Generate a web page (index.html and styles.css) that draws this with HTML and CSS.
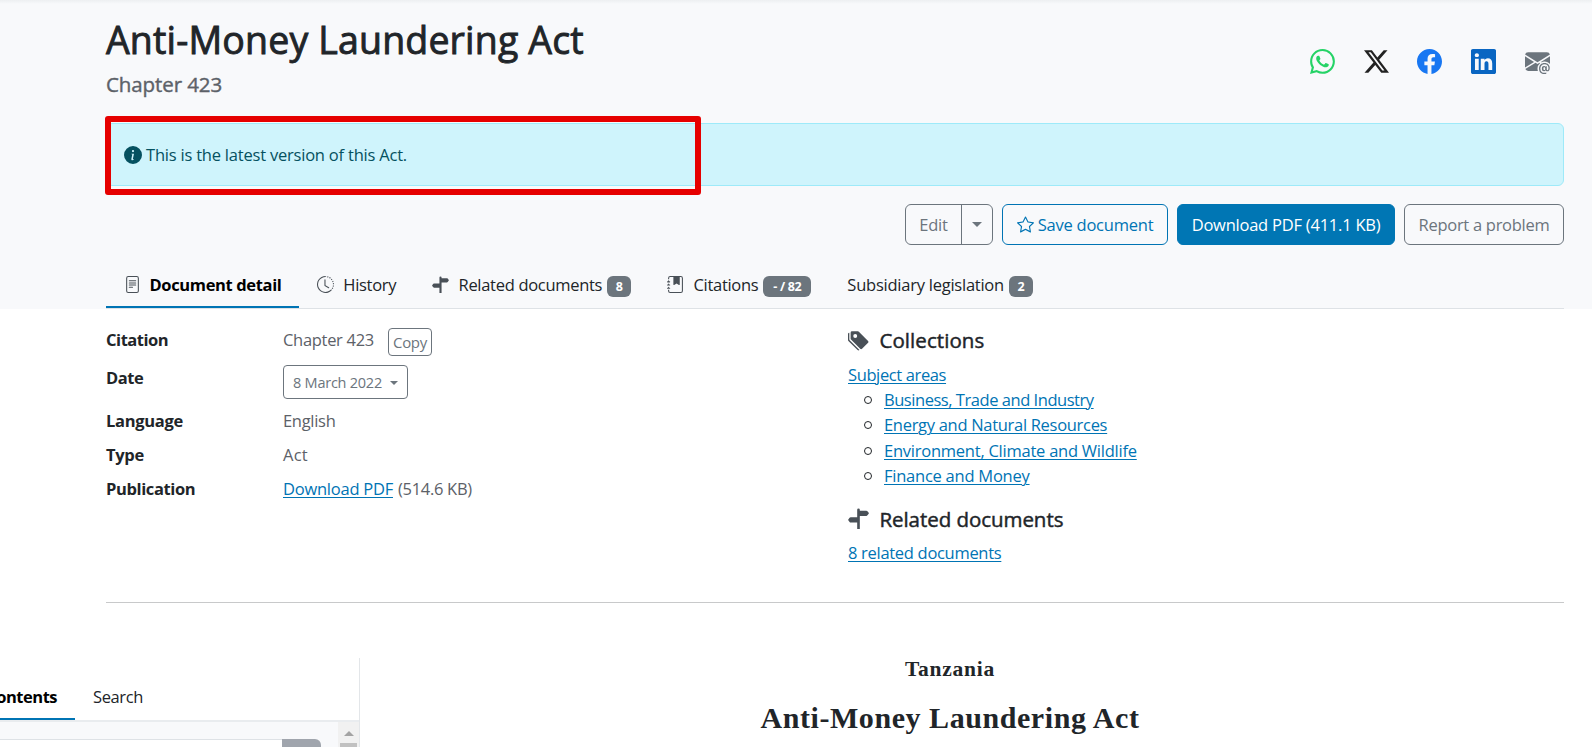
FILE: index.html
```
<!DOCTYPE html>
<html lang="en">
<head>
<meta charset="utf-8">
<title>Anti-Money Laundering Act</title>
<link rel="stylesheet" href="styles.css">
</head>
<body>
<svg class="defs" width="0" height="0">
  <symbol id="signpost" viewBox="0 0 16 16"><path d="M7 16h2V6h5a1 1 0 0 0 .8-.4l.975-1.3a.5.5 0 0 0 0-.6L14.8 2.4A1 1 0 0 0 14 2H9v-.586a1 1 0 0 0-2 0V7H2a1 1 0 0 0-.8.4L.225 8.7a.5.5 0 0 0 0 .6l.975 1.3a1 1 0 0 0 .8.4h5z"/></symbol>
</svg>
<header class="head">
  <div class="title-row">
    <div>
      <h1>Anti-Money Laundering Act</h1>
      <div class="sub">Chapter 423</div>
    </div>
    <div class="share">
      <svg class="wa" viewBox="0 0 16 16"><path d="M13.601 2.326A7.85 7.85 0 0 0 7.994 0C3.627 0 .068 3.558.064 7.926c0 1.399.366 2.76 1.057 3.965L0 16l4.204-1.102a7.9 7.9 0 0 0 3.79.965h.004c4.368 0 7.926-3.558 7.93-7.93A7.9 7.9 0 0 0 13.6 2.326zM7.994 14.521a6.6 6.6 0 0 1-3.356-.92l-.24-.144-2.494.654.666-2.433-.156-.251a6.56 6.56 0 0 1-1.007-3.505c0-3.626 2.957-6.584 6.591-6.584a6.56 6.56 0 0 1 4.66 1.931 6.56 6.56 0 0 1 1.928 4.66c-.004 3.639-2.961 6.592-6.592 6.592m3.615-4.934c-.197-.099-1.17-.578-1.353-.646-.182-.065-.315-.099-.445.099-.133.197-.513.646-.627.775-.114.133-.232.148-.43.05-.197-.1-.836-.308-1.592-.985-.59-.525-.985-1.175-1.103-1.372-.114-.198-.011-.304.088-.403.087-.088.197-.232.296-.346.1-.114.133-.198.198-.33.065-.134.034-.248-.015-.347-.05-.099-.445-1.076-.612-1.47-.16-.389-.323-.335-.445-.34-.114-.007-.247-.007-.38-.007a.73.73 0 0 0-.529.247c-.182.198-.691.677-.691 1.654s.71 1.916.81 2.049c.098.133 1.394 2.132 3.383 2.992.47.205.84.326 1.129.418.475.152.904.129 1.246.08.38-.058 1.171-.48 1.338-.943.164-.464.164-.86.114-.943-.049-.084-.182-.133-.38-.232"/></svg>
      <svg class="tx" viewBox="0 0 16 16"><path d="M12.6.75h2.454l-5.36 6.142L16 15.25h-4.937l-3.867-5.07-4.425 5.07H.316l5.733-6.57L0 .75h5.063l3.495 4.633L12.601.75Zm-.86 13.028h1.36L4.323 2.145H2.865z"/></svg>
      <svg class="fb" viewBox="0 0 16 16"><path d="M16 8.049c0-4.446-3.582-8.05-8-8.05C3.58 0-.002 3.603-.002 8.05c0 4.017 2.926 7.347 6.75 7.951v-5.625h-2.03V8.05H6.75V6.275c0-2.017 1.195-3.131 3.022-3.131.876 0 1.791.157 1.791.157v1.98h-1.009c-.993 0-1.303.621-1.303 1.258v1.51h2.218l-.354 2.326H9.25V16c3.824-.604 6.75-3.934 6.75-7.951"/></svg>
      <svg class="li" viewBox="0 0 16 16"><path d="M0 1.146C0 .513.526 0 1.175 0h13.65C15.474 0 16 .513 16 1.146v13.708c0 .633-.526 1.146-1.175 1.146H1.175C.526 16 0 15.487 0 14.854zm4.943 12.248V6.169H2.542v7.225zm-1.2-8.212c.837 0 1.358-.554 1.358-1.248-.015-.709-.52-1.248-1.342-1.248S2.4 3.226 2.4 3.934c0 .694.521 1.248 1.327 1.248zm4.908 8.212V9.359c0-.216.016-.432.08-.586.173-.431.568-.878 1.232-.878.869 0 1.216.662 1.216 1.634v3.865h2.401V9.25c0-2.22-1.184-3.252-2.764-3.252-1.274 0-1.845.7-2.165 1.193v.025h-.016l.016-.025V6.169h-2.4c.03.678 0 7.225 0 7.225z"/></svg>
      <svg class="em" viewBox="0 0 16 16"><path d="M2 2A2 2 0 0 0 .05 3.555L8 8.414l7.95-4.859A2 2 0 0 0 14 2zm-2 9.8V4.698l5.803 3.546zm6.761-2.97-6.57 4.026A2 2 0 0 0 2 14h6.256A4.5 4.5 0 0 1 8 12.5a4.49 4.49 0 0 1 1.606-3.446l-.367-.225L8 9.586zM16 9.671V4.697l-5.803 3.546.338.208A4.5 4.5 0 0 1 12.5 8c1.414 0 2.675.652 3.5 1.671"/><path d="M15.834 12.244c0 1.168-.577 2.025-1.587 2.025-.503 0-1.002-.228-1.12-.648h-.043c-.118.416-.543.643-1.015.643-.77 0-1.259-.542-1.259-1.434v-.529c0-.844.481-1.4 1.26-1.4.585 0 .87.333.953.63h.03v-.568h.905v2.19c0 .272.18.42.411.42.315 0 .639-.415.639-1.39v-.118c0-1.277-.95-2.326-2.484-2.326h-.04c-1.582 0-2.64 1.067-2.64 2.724v.157c0 1.867 1.237 2.654 2.57 2.654h.045c.507 0 .935-.07 1.18-.18v.731c-.219.1-.643.175-1.237.175h-.044C10.438 16 9 14.82 9 12.646v-.214C9 10.36 10.421 9 12.485 9h.035c2.12 0 3.314 1.43 3.314 3.034zm-4.04.21v.227c0 .586.227.8.581.8.31 0 .564-.17.564-.743v-.367c0-.516-.275-.708-.572-.708-.346 0-.573.245-.573.791"/></svg>
    </div>
  </div>
  <div class="alert">
    <svg viewBox="0 0 16 16"><path d="M8 16A8 8 0 1 0 8 0a8 8 0 0 0 0 16m.93-9.412-1 4.705c-.07.34.029.533.304.533.194 0 .487-.07.686-.246l-.088.416c-.287.346-.92.598-1.465.598-.703 0-1.002-.422-.808-1.319l.738-3.468c.064-.293.006-.399-.287-.47l-.451-.081.082-.381 2.29-.287zM8 5.5a1 1 0 1 1 0-2 1 1 0 0 1 0 2"/></svg>
    <span class="message">This is the latest version of this Act.</span>
    <div class="marker"></div>
  </div>
  <div class="actions">
    <div class="split"><span class="edit">Edit</span><span class="toggle"><i class="caret"></i></span></div>
    <a class="btn save"><svg viewBox="0 0 16 16"><path d="M2.866 14.85c-.078.444.36.791.746.593l4.39-2.256 4.389 2.256c.386.198.824-.149.746-.592l-.83-4.73 3.522-3.356c.33-.314.16-.888-.282-.95l-4.898-.696L8.465.792a.513.513 0 0 0-.927 0L5.354 5.12l-4.898.696c-.441.062-.612.636-.283.95l3.523 3.356-.83 4.73zm4.905-2.767-3.686 1.894.694-3.957a.56.56 0 0 0-.163-.505L1.71 6.745l4.052-.576a.53.53 0 0 0 .393-.288L8 2.223l1.847 3.658a.53.53 0 0 0 .393.288l4.052.575-2.906 2.77a.56.56 0 0 0-.163.506l.694 3.957-3.686-1.894a.5.5 0 0 0-.461 0z"/></svg><span>Save document</span></a>
    <a class="btn dl"><span>Download PDF (411.1 KB)</span></a>
    <a class="btn report"><span>Report a problem</span></a>
  </div>
  <nav class="tabs">
    <a class="tab active"><svg viewBox="0 0 16 16"><path d="M5 4a.5.5 0 0 0 0 1h6a.5.5 0 0 0 0-1zm-.5 2.5A.5.5 0 0 1 5 6h6a.5.5 0 0 1 0 1H5a.5.5 0 0 1-.5-.5M5 8a.5.5 0 0 0 0 1h6a.5.5 0 0 0 0-1zm0 2a.5.5 0 0 0 0 1h3a.5.5 0 0 0 0-1z"/><path d="M2 2a2 2 0 0 1 2-2h8a2 2 0 0 1 2 2v12a2 2 0 0 1-2 2H4a2 2 0 0 1-2-2zm10-1H4a1 1 0 0 0-1 1v12a1 1 0 0 0 1 1h8a1 1 0 0 0 1-1V2a1 1 0 0 0-1-1"/></svg><span>Document detail</span></a>
    <a class="tab"><svg viewBox="0 0 16 16"><path d="M8.515 1.019A7 7 0 0 0 8 1V0a8 8 0 0 1 .589.022zm2.004.45a7 7 0 0 0-.985-.299l.219-.976q.576.129 1.126.342zm1.37.71a7 7 0 0 0-.439-.27l.493-.87a8 8 0 0 1 .979.654l-.615.789a7 7 0 0 0-.418-.302zm1.834 1.79a7 7 0 0 0-.653-.796l.724-.69q.406.429.747.91zm.744 1.352a7 7 0 0 0-.214-.468l.893-.45a8 8 0 0 1 .45 1.088l-.95.313a7 7 0 0 0-.179-.483m.53 2.507a7 7 0 0 0-.1-1.025l.985-.17q.1.58.116 1.17zm-.131 1.538q.05-.254.081-.51l.993.123a8 8 0 0 1-.23 1.155l-.964-.267q.069-.247.12-.501m-.952 2.379q.276-.436.486-.908l.914.405q-.24.54-.555 1.038zm-.964 1.205q.183-.183.35-.378l.758.653a8 8 0 0 1-.401.432z"/><path d="M8 1a7 7 0 1 0 4.95 11.95l.707.707A8.001 8.001 0 1 1 8 0z"/><path d="M7.5 3a.5.5 0 0 1 .5.5v5.21l3.248 1.856a.5.5 0 0 1-.496.868l-3.5-2A.5.5 0 0 1 7 9V3.5a.5.5 0 0 1 .5-.5"/></svg><span>History</span></a>
    <a class="tab"><svg viewBox="0 0 16 16"><use href="#signpost"/></svg><span>Related documents</span><b class="badge">8</b></a>
    <a class="tab"><svg viewBox="0 0 16 16"><path d="M5 0h8a2 2 0 0 1 2 2v12a2 2 0 0 1-2 2H3a2 2 0 0 1-2-2v-1h1v1a1 1 0 0 0 1 1h10a1 1 0 0 0 1-1V2a1 1 0 0 0-1-1H3a1 1 0 0 0-1 1v1H1V2a2 2 0 0 1 2-2z"/><path d="M6 1h6v7a.5.5 0 0 1-.757.429L9 7.083 6.757 8.43A.5.5 0 0 1 6 8z"/><path d="M1 5v-.5a.5.5 0 0 1 1 0V5h.5a.5.5 0 0 1 0 1h-2a.5.5 0 0 1 0-1zm0 3v-.5a.5.5 0 0 1 1 0V8h.5a.5.5 0 0 1 0 1h-2a.5.5 0 0 1 0-1zm0 3v-.5a.5.5 0 0 1 1 0v.5h.5a.5.5 0 0 1 0 1h-2a.5.5 0 0 1 0-1z"/></svg><span>Citations</span><b class="badge wide">- / 82</b></a>
    <a class="tab"><span class="snug">Subsidiary legislation</span><b class="badge">2</b></a>
  </nav>
</header>
<main>
  <section class="detail">
    <dl>
      <dt class="tighter">Citation</dt><dd><span>Chapter 423</span><a class="copy">Copy</a></dd>
      <dt class="tighter">Date</dt><dd><a class="date"><span class="snug">8 March 2022</span><i class="caret small"></i></a></dd>
      <dt>Language</dt><dd><span>English</span></dd>
      <dt>Type</dt><dd><span class="loose">Act</span></dd>
      <dt class="tight">Publication</dt><dd><a class="link snug">Download PDF</a><span class="gap">(514.6 KB)</span></dd>
    </dl>
    <div class="side">
      <h2><svg viewBox="0 0 16 16"><path d="M2 2a1 1 0 0 1 1-1h4.586a1 1 0 0 1 .707.293l7 7a1 1 0 0 1 0 1.414l-4.586 4.586a1 1 0 0 1-1.414 0l-7-7A1 1 0 0 1 2 6.586zm3.5 4a1.5 1.5 0 1 0 0-3 1.5 1.5 0 0 0 0 3"/><path d="M1.293 7.793A1 1 0 0 1 1 7.086V2a1 1 0 0 0-1 1v4.586a1 1 0 0 0 .293.707l7 7a1 1 0 0 0 1.414 0l.043-.043z"/></svg><span class="collections">Collections</span></h2>
      <a class="link tight">Subject areas</a>
      <ul>
        <li><a class="link tighter">Business, Trade and Industry</a></li>
        <li><a class="link">Energy and Natural Resources</a></li>
        <li><a class="link snug">Environment, Climate and Wildlife</a></li>
        <li><a class="link snug">Finance and Money</a></li>
      </ul>
      <h2><svg viewBox="0 0 16 16"><use href="#signpost"/></svg>Related documents</h2>
      <a class="link">8 related documents</a>
    </div>
  </section>
  <div class="document">
    <aside>
      <div class="toc-tabs"><span class="toc-active">Contents</span><span class="toc-search">Search</span></div>
      <div class="toc-body"><div class="field"><div class="input"></div><div class="go"></div></div><div class="scroll"><i class="up"></i><i class="thumb"></i></div></div>
    </aside>
    <article><h3>Tanzania</h3><h4>Anti-Money Laundering Act</h4></article>
  </div>
</main>
</body>
</html>
```
FILE: styles.css
```
*, ::before { box-sizing: border-box; }
body { margin: 0; height: 747px; overflow: hidden; background: #fff; color: #212529; font: 16.5px/25.5px "Open Sans", "Noto Sans", sans-serif; letter-spacing: -.3px; white-space: nowrap; }
svg { fill: currentColor; display: block; flex: none; }
.defs { position: absolute; }
.snug { letter-spacing: -.24px; }
.message { letter-spacing: -.21px; }
.tight { letter-spacing: -.38px; }
.tighter { letter-spacing: -.46px; }
.loose { letter-spacing: .2px; }
h1, h2, h3, h4, dl, dd, ul { margin: 0; padding: 0; }
.head { height: 309px; padding: 0 28px 0 106px; background: linear-gradient(#edeff1, #f8f9fb 4px); }
.title-row { display: flex; justify-content: space-between; height: 123px; }
h1 { font-size: 37.5px; line-height: 46px; font-weight: 400; letter-spacing: .16px; padding-top: 17px; -webkit-text-stroke: .9px currentColor; }
.sub { font-size: 20.5px; line-height: 26px; letter-spacing: -.1px; color: #5c6168; margin-top: 8px; -webkit-text-stroke: .4px currentColor; }
.share { display: flex; gap: 28.7px; padding: 49px 14.4px 0 0; }
.share svg { width: 25px; height: 25px; }
.wa { color: #25d366; }
.tx { color: #222; }
.fb { color: #1877f2; }
.li { color: #0a66c2; }
.em { color: #6c757d; }
.alert { position: relative; height: 63px; border: 1px solid #9eeaf9; border-radius: 6px; background: #cff4fc; color: #055160; display: flex; align-items: center; gap: 4px; padding-left: 17px; }
.alert svg { width: 18px; height: 18px; }
.marker { position: absolute; left: -2px; top: -8px; width: 596px; height: 79px; border: 6px solid #e60000; border-radius: 3px; }
.actions { display: flex; justify-content: flex-end; gap: 9px; margin-top: 18px; height: 41px; letter-spacing: -.23px; }
.btn { display: flex; align-items: center; justify-content: center; gap: 4px; border: 1px solid #6c757d; border-radius: 6px; color: #6c757d; }
.save { width: 166px; border-color: #0074b4; color: #0074b4; }
.save svg { width: 17px; height: 17px; }
.dl { width: 218px; background: #0076b4; border-color: #0076b4; color: #fff; }
.report { width: 160px; letter-spacing: -.28px; }
.split { display: flex; width: 88px; border: 1px solid #6c757d; border-radius: 6px; color: #6c757d; }
.edit { width: 56px; border-right: 1px solid #6c757d; display: flex; align-items: center; justify-content: center; }
.toggle { flex: 1; display: flex; align-items: center; justify-content: center; }
.caret { border: 5px solid transparent; border-top-color: currentColor; border-bottom: 0; }
.caret.small { border-width: 4px 4px 0; margin-left: 8px; }
.tabs { display: flex; margin-top: 16px; height: 48px; border-bottom: 1px solid #dee2e6; }
.tab { display: flex; align-items: center; padding: 0 18px; }
.tab svg { width: 17px; height: 17px; margin-right: 9.3px; color: #495057; }
.active { width: 193px; border-bottom: 2px solid #0074b4; color: #000; font-weight: 700; letter-spacing: -.36px; padding-top: 2px; }
.active svg { margin-right: 8.5px; }
.badge { width: 24px; height: 21px; margin: 3px 0 0 5px; border-radius: 6px; background: #6c757d; color: #fff; font-size: 12.5px; line-height: 21px; text-align: center; }
.wide { width: 48px; }
.detail { display: flex; margin: 0 28px 0 106px; height: 294px; border-bottom: 1px solid #c8c9ca; }
dl { width: 742px; display: grid; grid-template-columns: 177px 1fr; grid-template-rows: 38px 43px 34px 34px 34px; padding-top: 18px; align-content: start; }
dt { font-weight: 700; }
dd { display: flex; color: #5c6168; }
.copy { margin: 1px 0 0 14px; padding-top: 2px; width: 44px; height: 28px; border: 1px solid #6c757d; border-radius: 4px; color: #6c757d; display: flex; align-items: center; justify-content: center; font-size: 15px; }
.date { width: 125px; height: 34px; padding-top: 1px; border: 1px solid #6c757d; border-radius: 4px; color: #6c757d; display: flex; align-items: center; justify-content: center; font-size: 14.5px; }
.link { color: #0074b4; text-decoration: underline; text-underline-offset: 2px; text-decoration-thickness: 1px; }
.gap { margin-left: 5px; }
.side { padding-top: 18px; }
h2 { display: flex; align-items: center; gap: 10.4px; font-size: 20.5px; line-height: 26px; font-weight: 400; letter-spacing: -.05px; margin-bottom: 8.6px; -webkit-text-stroke: .45px currentColor; }
h2 svg { width: 21px; height: 21px; color: #495057; }
h2 path, h2 use { stroke: none; }
.collections { letter-spacing: .08px; }
ul { list-style: none; margin-bottom: 17px; }
li { display: flex; align-items: center; height: 25.4px; }
li::before { content: ""; width: 8px; height: 8px; border: 1.4px solid #212529; border-radius: 50%; margin: 0 12px 0 16px; }
.document { display: flex; }
aside { width: 360px; height: 90px; margin-top: 55px; border-right: 1px solid #e3e6e9; }
.toc-tabs { display: flex; height: 64px; border-bottom: 2px solid #e9ecef; }
.toc-active { width: 75px; display: flex; justify-content: flex-end; padding: 26px 18px 0 0; border-bottom: 2px solid #0074b4; color: #000; font-weight: 700; letter-spacing: -.5px; }
.toc-search { padding: 26px 0 0 18px; letter-spacing: -.38px; }
.toc-body { display: flex; height: 26px; background: #f8f9fb; }
.field { display: flex; width: 321px; margin: 17px 17px 0 0; }
.input { width: 282px; border-top: 1px solid #dee2e6; background: #fff; }
.go { flex: 1; background: #a0a5ad; border-top-right-radius: 6px; }
.scroll { flex: 1; background: #f1f1f1; display: flex; flex-direction: column; align-items: center; }
.up { margin-top: 9px; border: 5px solid transparent; border-top: 0; border-bottom-color: #a3a3a3; }
.thumb { width: 17px; height: 10px; margin-top: 7px; background: #c1c1c1; }
article { flex: 1; padding: 53px 0 0 0; margin-left: -52px; font-family: "Liberation Serif", serif; text-align: center; }
article h3 { font-size: 21.5px; line-height: 26px; letter-spacing: .74px; }
article h4 { font-size: 30px; line-height: 36px; letter-spacing: .56px; margin-top: 18px; }
```
